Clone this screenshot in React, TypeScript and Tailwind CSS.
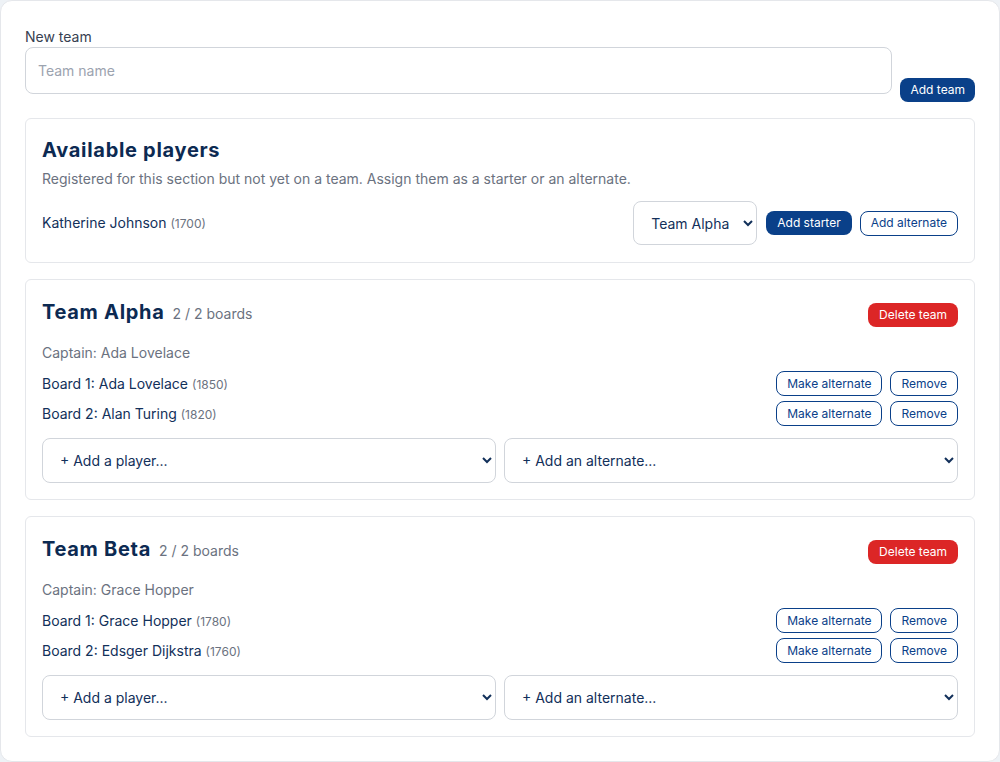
import React from "react";

type Player = { name: string; rating: number };
type Team = { name: string; captain: string; boards: Player[] };

const teams: Team[] = [
  {
    name: "Team Alpha",
    captain: "Ada Lovelace",
    boards: [
      { name: "Ada Lovelace", rating: 1850 },
      { name: "Alan Turing", rating: 1820 },
    ],
  },
  {
    name: "Team Beta",
    captain: "Grace Hopper",
    boards: [
      { name: "Grace Hopper", rating: 1780 },
      { name: "Edsger Dijkstra", rating: 1760 },
    ],
  },
];

const solidBtn =
  "h-6 px-[11px] rounded-lg bg-[#0a4089] text-white text-xs leading-none";
const outlineBtn =
  "h-[25px] px-2.5 rounded-lg border border-[#0a4089] bg-white text-[#0a4089] text-xs leading-none";
const selectCls =
  "bg-white border border-[#d1d5db] rounded-lg pl-[13px] pr-1 text-sm text-[#12305a]";
const headingCls = "text-xl font-bold tracking-[0.7px] text-[#0c2a52] leading-[30px]";

function TeamCard({ team }: { team: Team }) {
  return (
    <div className="border border-[#e5e7eb] rounded-md p-4">
      <div className="flex items-end justify-between pt-px">
        <div className="flex items-baseline gap-2">
          <h3 className={headingCls}>{team.name}</h3>
          <span className="text-sm text-[#6b7280]">{team.boards.length} / 2 boards</span>
        </div>
        <button className="h-6 px-[11px] rounded-lg bg-[#dc2626] text-white text-xs leading-none">
          Delete team
        </button>
      </div>
      <p className="mt-4 text-sm text-[#6b7280] leading-5">Captain: {team.captain}</p>
      <div className="mt-2 flex flex-col gap-[5px]">
        {team.boards.map((p, i) => (
          <div key={p.name} className="flex items-center justify-between">
            <span className="text-sm text-[#12305a]">
              Board {i + 1}: {p.name} <span className="text-xs text-[#6b7280]">({p.rating})</span>
            </span>
            <div className="flex gap-2">
              <button className={outlineBtn}>Make alternate</button>
              <button className={outlineBtn}>Remove</button>
            </div>
          </div>
        ))}
      </div>
      <div className="mt-3 grid grid-cols-2 gap-2">
        <select className={selectCls + " w-full h-[45px]"}>
          <option>+ Add a player...</option>
        </select>
        <select className={selectCls + " w-full h-[45px]"}>
          <option>+ Add an alternate...</option>
        </select>
      </div>
    </div>
  );
}

export default function App() {
  return (
    <div
      className="min-h-screen bg-[#eef2f6]"
      style={{ fontFamily: "Inter, 'Liberation Sans', sans-serif" }}
    >
      <div className="w-[1000px] h-[762px] bg-white border border-[#e5e7eb] rounded-xl p-6">
        <div className="flex items-end gap-2">
          <div className="flex-1 mb-2">
            <label className="block text-sm text-[#374151] leading-5 pt-0.5">New team</label>
            <input
              className="w-full h-[47px] border border-[#d1d5db] rounded-lg px-3 text-sm placeholder:text-[#9ca3af]"
              placeholder="Team name"
            />
          </div>
          <button className="h-6 px-[10px] rounded-lg bg-[#0a4089] text-white text-xs leading-none">
            Add team
          </button>
        </div>

        <div className="mt-4 flex flex-col gap-4">
          <div className="border border-[#e5e7eb] rounded-md px-4 pt-4 pb-[17px]">
            <h3 className={headingCls}>Available players</h3>
            <p className="mt-1 text-sm text-[#6b7280] leading-5">
              Registered for this section but not yet on a team. Assign them as a starter or an alternate.
            </p>
            <div className="mt-3 flex items-center justify-between">
              <span className="text-sm text-[#12305a]">
                Katherine Johnson <span className="text-xs text-[#6b7280]">(1700)</span>
              </span>
              <div className="flex items-center gap-2">
                <select className={selectCls + " w-[124px] h-[44px]"}>
                  <option>Team Alpha</option>
                  <option>Team Beta</option>
                </select>
                <button className={solidBtn + " ml-px"}>Add starter</button>
                <button className={outlineBtn}>Add alternate</button>
              </div>
            </div>
          </div>

          {teams.map((t) => (
            <TeamCard key={t.name} team={t} />
          ))}
        </div>
      </div>
    </div>
  );
}
